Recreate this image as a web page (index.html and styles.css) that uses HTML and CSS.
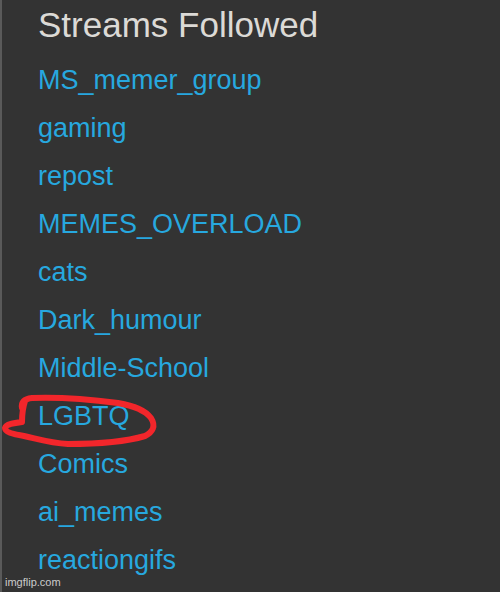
FILE: index.html
```html
<!DOCTYPE html>
<html lang="en">
<head>
  <meta charset="UTF-8" />
  <meta name="viewport" content="width=device-width, initial-scale=1.0">
  <title>Streams Followed</title>
  <link rel="stylesheet" href="styles.css">
</head>
<body>

  <div class="panel">
    <h2>Streams Followed</h2>

    <ul class="streams">
      <li><a href="#">MS_memer_group</a></li>
      <li><a href="#">gaming</a></li>
      <li><a href="#">repost</a></li>
      <li><a href="#">MEMES_OVERLOAD</a></li>
      <li><a href="#">cats</a></li>
      <li><a href="#">Dark_humour</a></li>
      <li><a href="#">Middle-School</a></li>
      <li><a href="#">LGBTQ</a></li>
      <li><a href="#">Comics</a></li>
      <li><a href="#">ai_memes</a></li>
      <li><a href="#">reactiongifs</a></li>
    </ul>

    <!-- red marker scribble around LGBTQ -->
    <svg class="scribble" viewBox="0 0 500 592" width="500" height="592">
      <path d="M22 408 C21 402 24 399 32 398 C60 397 95 400 118 403 C135 406 145 410 151 418 C156 426 153 432 145 436 C128 441 100 444 68 444 C50 443 38 439 24 436 C12 434 5 432 5 428 C6 424 14 423 22 422 C22 416 22 410 25 401"
            fill="none" stroke="#f2262b" stroke-width="6" stroke-linecap="round" stroke-linejoin="round"/>
    </svg>

    <div class="watermark">imgflip.com</div>
  </div>

</body>
</html>
```

FILE: styles.css
```css
html, body {
  margin: 0;
  height: 100%;
}

body {
  background-color: #333333;
  font-family: 'Liberation Sans', Arial, sans-serif;
}

.panel {
  position: relative;
  height: 592px;
  box-sizing: border-box;
  border-left: 2px solid #5a5a5a;
  padding: 1px 0 0 36px;
  overflow: hidden;
}

h2 {
  margin: 0;
  font-size: 35px;
  font-weight: normal;
  line-height: 48px;
  color: #dcdad6;
}

.streams {
  list-style: none;
  margin: 7px 0 0;
  padding: 0;
}

.streams li {
  font-size: 27px;
  line-height: 48px;
}

.streams a {
  color: #27a8df;
  text-decoration: none;
}

.scribble {
  position: absolute;
  top: 0;
  left: -2px;
  pointer-events: none;
}

.watermark {
  position: absolute;
  left: 3px;
  bottom: 4px;
  font-size: 11px;
  color: rgba(255, 255, 255, 0.75);
}
```
